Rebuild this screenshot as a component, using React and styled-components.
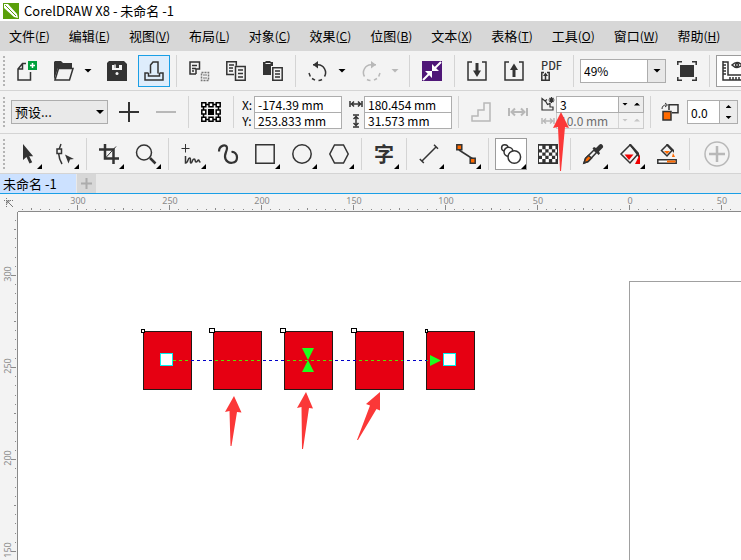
import React, { useEffect, useState } from 'react';
import styled, { createGlobalStyle, css } from 'styled-components';

const INK = '#333333';
const BAR = '#f3f3f3';
const LINE = '#d4d4d4';
const FIELD_LINE = '#adadad';
const FADED = '#b8b8b8';
const ORANGE = '#ff6a00';
const ACCENT = '#1a9fe6';
const RULER = '#8a8a8a';
const MARK = '#fb3838';
const SANS = '"Noto Sans CJK SC", "Noto Sans", sans-serif';

const GlobalStyle = createGlobalStyle`
  *, *::before, *::after {
    box-sizing: border-box;
  }

  body {
    margin: 0;
    overflow: hidden;
    background: #ffffff;
    color: #000000;
    font-family: ${SANS};
    font-size: 12px;
  }

  button, input, select {
    margin: 0;
    border-radius: 0;
    color: inherit;
    font: inherit;
  }
`;

const Window = styled.div`
  display: flex;
  flex-direction: column;
  min-height: 100vh;
`;

const TitleBar = styled.header`
  display: flex;
  align-items: center;
  gap: 5px;
  height: 21px;
  padding: 0 3px;
`;

const Title = styled.h1`
  margin: 0;
  font-size: 13px;
  font-weight: 400;
  line-height: 20px;
`;

const MenuBar = styled.nav`
  display: flex;
  gap: 1px;
  height: 30px;
  background: #d7d7d7;
  overflow: hidden;
`;

const MenuItem = styled.button`
  flex: none;
  padding: 0 9px;
  border: 0;
  background: none;
  font-size: 13px;
  line-height: 28px;
  white-space: nowrap;
`;

const Shortcut = styled.span`
  font-size: 12px;
`;

const Toolbar = styled.div`
  display: flex;
  align-items: center;
  gap: 5px;
  height: ${({ $tall }) => ($tall ? 43 : 40)}px;
  padding-left: 2px;
  border-bottom: 1px solid ${LINE};
  background: ${BAR};

  > * {
    flex: none;
  }
`;

const Grip = styled.span`
  width: 4px;
  height: 32px;
  background: radial-gradient(circle, #b4b4b4 1px, transparent 1px) 0 0 / 4px 4px;
`;

const Separator = styled.span`
  width: 1px;
  height: 32px;
  margin: 0 1px;
  background: ${LINE};
`;

const ToolButton = styled.button`
  position: relative;
  display: flex;
  align-items: center;
  justify-content: center;
  width: ${({ $size }) => ({ small: 25, large: 42 })[$size] || 32}px;
  height: 32px;
  padding: 0;
  border: 1px solid transparent;
  background: none;

  ${({ $state }) => $state === 'active' && css`
    border-color: ${ACCENT};
    background: #deedfc;
  `}

  ${({ $state }) => $state === 'pressed' && css`
    border-color: #9c9c9c;
    background: #ffffff;
  `}

  ${({ $flyout }) => $flyout && css`
    &::after {
      content: '';
      position: absolute;
      right: 0;
      bottom: 0;
      border-bottom: 5px solid #000000;
      border-left: 5px solid transparent;
    }
  `}
`;

const Split = styled.div`
  display: flex;
`;

const Caret = styled.span`
  width: 8px;
  height: 4px;
  background: currentColor;
  clip-path: ${({ $up }) => ($up ? 'polygon(50% 0, 100% 100%, 0 100%)' : 'polygon(0 0, 100% 0, 50% 100%)')};
`;

const CaretButton = styled.button`
  display: flex;
  align-items: center;
  justify-content: center;
  width: 16px;
  padding: 0;
  border: 0;
  background: none;

  &:disabled {
    color: ${FADED};
  }
`;

const SelectBox = styled.div`
  position: relative;
  width: ${({ $wide }) => ($wide ? 97 : 86)}px;

  > ${Caret} {
    position: absolute;
    top: 10px;
    right: ${({ $wide }) => ($wide ? 4 : 5)}px;
    pointer-events: none;
  }
`;

const Select = styled.select`
  appearance: none;
  display: block;
  width: 100%;
  height: 24px;
  padding: 0 3px;
  border: 1px solid ${FIELD_LINE};
  background: ${({ $split }) => ($split
    ? `linear-gradient(to left, #e8e8e8 17px, ${FIELD_LINE} 17px, ${FIELD_LINE} 18px, #ffffff 18px)`
    : '#e9e9e9')};
  font-size: ${({ $split }) => ($split ? 12 : 13)}px;
  line-height: 20px;
`;

const Fields = styled.div`
  position: relative;
  display: grid;
  grid-template-columns: ${({ $label }) => $label}px 88px;
  grid-template-rows: 17px 16px;
`;

const FieldLabel = styled.label`
  display: flex;
  align-items: center;
  justify-content: center;
`;

const Field = styled.div`
  display: flex;
  border: 1px solid ${FIELD_LINE};
  background: #ffffff;

  & + label + & {
    border-top: 0;
  }

  ${({ $muted }) => $muted && css`
    border-color: #cccccc;
    background: ${BAR};
    color: #6d6d6d;
  `}
`;

const TextInput = styled.input`
  flex: 1;
  min-width: 0;
  width: 100%;
  padding: 0 3px;
  border: 0;
  background: none;
  line-height: 15px;
`;

const Steppers = styled.div`
  display: flex;
  flex-direction: ${({ $stacked }) => ($stacked ? 'column' : 'row')};
  width: ${({ $stacked }) => ($stacked ? 18 : 25)}px;
  border-left: 1px solid ${({ $muted }) => ($muted ? LINE : FIELD_LINE)};
  background: ${({ $muted }) => ($muted ? BAR : '#ececec')};
`;

const Stepper = styled.button`
  display: flex;
  flex: 1;
  align-items: center;
  justify-content: center;
  padding: 0;
  border: 0;
  background: none;

  > ${Caret} {
    width: 6px;
    height: 3px;
  }

  &:disabled {
    color: #c6c6c6;
  }
`;

const OffsetField = styled(Field)`
  width: 51px;
  height: 24px;
`;

const CalloutArrow = styled.svg`
  position: absolute;
  top: 16px;
  left: 13px;
  z-index: 1;
  pointer-events: none;
`;

const Glyph = styled.span`
  color: ${INK};
  font-size: 20px;
  font-weight: 700;
  line-height: 20px;
`;

const Tabs = styled.div`
  display: flex;
  gap: 1px;
  height: 20px;
  border-bottom: 1px solid ${ACCENT};
  background: #e9e9e9;
`;

const Tab = styled.button`
  width: 76px;
  padding: 0 3px;
  border: 0;
  background: #cce1ff;
  font-size: 13px;
  line-height: 18px;
  text-align: left;
  white-space: nowrap;
`;

const AddTab = styled.button`
  display: flex;
  align-items: center;
  justify-content: center;
  width: 19px;
  padding: 0;
  border: 0;
  background: #d7d7d7;
`;

const Workspace = styled.main`
  display: grid;
  flex: 1;
  grid-template-columns: 18px minmax(0, 1fr);
  grid-template-rows: 18px minmax(300px, 1fr);
  background: ${BAR};
`;

const Origin = styled.div`
  display: flex;
  align-items: center;
  justify-content: center;
`;

const Scale = styled.svg`
  display: block;
  width: 100%;
  height: 100%;
  border: 0 solid ${RULER};
  border-width: ${({ $vertical }) => ($vertical ? '0 1px 0 0' : '0 0 1px 0')};
  font-family: "Noto Sans", sans-serif;
  font-size: 9px;
  overflow: visible;
`;

const Canvas = styled.svg`
  display: block;
  width: 100%;
  height: 100%;
  background: #ffffff;
`;

const Drawn = styled.svg`
  flex: none;
  overflow: visible;
`;

const Icon = ({ children, w = 20, h = 20, color = INK, stroke = 1.5 }) => (
  <Drawn width={w} height={h} viewBox={`0 0 ${w} ${h}`} fill="none" stroke={color} strokeWidth={stroke} aria-hidden="true">
    {children}
  </Drawn>
);

const icons = {
  create: (
    <Icon>
      <path d="M9 2.500H5.500L1 8v11h12.500v-8M1 8h4.500V2.500" />
      <path d="M11 0h9v9h-9z" fill="#00a03c" stroke="none" />
      <path d="M15.500 2v5M13 4.500h5" stroke="#fff" />
    </Icon>
  ),
  open: (
    <Icon>
      <path d="M0 19V1l1-1h6l2 2h9v5H4z" fill={INK} stroke="none" />
      <path d="M4.500 7.500H19L15.500 19H1z" fill={BAR} />
    </Icon>
  ),
  save: (
    <Icon>
      <path d="M2 0h15l3 3v17H0V2z" fill={INK} stroke="none" />
      <path d="M5 4h10v5H5z" fill={BAR} stroke="none" />
      <path d="M7 4h5v3H7z" fill={INK} stroke="none" />
      <path d="M8 3.500v3.500" stroke={BAR} />
      <circle cx="10" cy="12.500" r="1.500" fill={BAR} stroke="none" />
    </Icon>
  ),
  print: (
    <Icon>
      <path d="M6.500 12.500V4L9 1h5v11.500M4.500 12H1v7h18v-7h-3.500M4.500 12v3h11v-3" />
    </Icon>
  ),
  cut: (
    <Icon>
      <path d="M7 13H1V1h9.500v7H7v5M3 4.500h5M3 7.500h4M3 10h2" />
      <path d="M12.500 11.500h7v8h-7z" strokeDasharray="2 1" stroke="#777" />
      <path d="M14 14h4M14 17h4" stroke="#777" strokeWidth="1" />
    </Icon>
  ),
  copy: (
    <Icon>
      <path d="M8 13.500H.8V.8h9.500v4M3 4h5M3 7h4M3 10h4" />
      <path d="M9.500 5.500h9.700v13.700H9.500zM12 9h5M12 12.500h5M12 16h5" />
    </Icon>
  ),
  paste: (
    <Icon>
      <path d="M0 1h2l1-1h4l1 1h2v4H8v9H0z" fill={INK} stroke="none" />
      <path d="M2.500 2.500h5" stroke={BAR} strokeWidth="1" />
      <path d="M9.800 6.800h9.400v12.400H9.800zM12 10h5M12 13h5M12 16h5" />
    </Icon>
  ),
  undo: (
    <Icon>
      <path d="M5 3.800H10A7.800 7.800 0 0 1 16.500 15.500M14 18.500A8 8 0 0 1 10.500 19.500M7 19.200L4 17.500M2.300 15.500L1 12" />
      <path d="M5 3.800L10 0v7.500z" fill={INK} stroke="none" />
    </Icon>
  ),
  redo: (
    <Icon color={FADED}>
      <path d="M15 3.800H10A7.800 7.800 0 0 0 3.500 15.500M6 18.500A8 8 0 0 0 9.500 19.500M13 19.200L16 17.500M17.700 15.500L19 12" />
      <path d="M15 3.800L10 0v7.500z" fill={FADED} stroke="none" />
    </Icon>
  ),
  launch: (
    <Icon>
      <path d="M0 0h20v20H0z" fill="#4f1778" stroke="none" />
      <path d="M1 19L7 13M19 1L13 7" stroke="#fff" strokeWidth="2" />
      <path d="M3 10h7v7zM10 3v7h7z" fill="#fff" stroke="none" />
    </Icon>
  ),
  importFile: (
    <Icon>
      <path d="M5 1H1v18h18V1h-4" />
      <path d="M10 2v9" strokeWidth="3" />
      <path d="M6 9.500h8L10 16z" fill={INK} stroke="none" />
    </Icon>
  ),
  exportFile: (
    <Icon>
      <path d="M5 1H1v18h18V1h-4" />
      <path d="M10 8v8" strokeWidth="3" />
      <path d="M6 9h8L10 2.500z" fill={INK} stroke="none" />
    </Icon>
  ),
  pdf: (
    <Icon>
      <text x="0" y="9" fill={INK} stroke="none" fontSize="11" fontWeight="500">PDF</text>
      <path d="M3 11.500H.8v7.700h7.400v-7.700H6M4.500 14v5" />
      <path d="M2 15h5l-2.500-3.500z" fill={INK} stroke="none" />
    </Icon>
  ),
  fullScreen: (
    <Icon>
      <path d="M0 .8h5M.8 0v4M20 .8h-5M19.200 0v4M0 19.200h5M.8 20v-4M20 19.200h-5M19.200 20v-4" />
      <path d="M3 4h14v12H3z" fill={INK} stroke="none" />
    </Icon>
  ),
  rulers: (
    <Icon w={30}>
      <path d="M1 1h5v13h24M1 0v19h29M1 4h3M1 7h3M1 10h3M1 13h3M8 19v-3M11 19v-3M14 19v-3M17 19v-3M20 19v-3M23 19v-3" />
      <path d="M10 4q5-5 10 0q-5 5-10 0z" />
      <circle cx="15" cy="4" r="1.500" />
    </Icon>
  ),
  plus: <Icon stroke={2}><path d="M10 0v20M0 10h20" /></Icon>,
  minus: <Icon stroke={2} color={FADED}><path d="M0 10h20" /></Icon>,
  anchor: (
    <Icon color="#000">
      <path d="M2.500 2.500h15v15h-15z" />
      <path d="M.8.800h4v4h-4zM8 .8h4v4H8zM15.200.800h4v4h-4zM.8 8h4v4h-4zM15.200 8h4v4h-4zM.8 15.200h4v4h-4zM8 15.200h4v4H8zM15.200 15.200h4v4h-4z" fill="#fff" />
      <path d="M7 7h6v6H7z" fill="#000" stroke="none" />
    </Icon>
  ),
  steps: <Icon color={FADED}><path d="M1 19v-5h6V8h6V1h6v18z" /></Icon>,
  spacing: <Icon color={FADED} stroke={2}><path d="M1 6v8M19 6v8M3 10h14M7 6.500L3.500 10L7 13.500M13 6.500l3.500 3.500l-3.500 3.500" /></Icon>,
  width: <Icon w={14} h={8}><path d="M1 1v6M13 1v6M2 4h10M5 1.500L2.500 4L5 6.500M9 1.500L11.500 4L9 6.500" /></Icon>,
  widthFaded: <Icon w={14} h={8} color={FADED}><path d="M1 1v6M13 1v6M2 4h10M5 1.500L2.500 4L5 6.500M9 1.500L11.500 4L9 6.500" /></Icon>,
  height: <Icon w={8} h={14}><path d="M1 1h6M1 13h6M4 2v10M1.500 5L4 2.500L6.500 5M1.500 9L4 11.500L6.500 9" /></Icon>,
  count: (
    <Icon w={14} h={14} stroke={1.2}>
      <path d="M6 2.500L4 4L1 1.500V13H12V10H9V6.500L6.500 7.500L4.500 4" />
      <path d="M10.500 0v6M7.500 3h6M8.500 1l4 4M12.500 1l-4 4" />
    </Icon>
  ),
  duplicate: (
    <Icon w={18} h={18}>
      <path d="M8 7V1.800h9v8h-6" />
      <path d="M2 8.500h8V17H2z" fill={ORANGE} />
      <path d="M1 6C1 3 3 2 5 2M4 0l2.500 2L4 4" strokeWidth="1" />
    </Icon>
  ),
  pick: <Icon><path d="M6 0v16l3.500-3l3 6.500l2.700-1.300l-3-6h4z" fill={INK} stroke="none" /></Icon>,
  shape: (
    <Icon>
      <path d="M7 0Q2 10 8 20" />
      <path d="M3 5h4.500v4.500H3z" fill={BAR} />
      <path d="M11 10.500l9 4.500l-4 .5l-1.500 4z" fill={INK} stroke="none" />
    </Icon>
  ),
  crop: (
    <Icon>
      <path d="M0 5.500h14.500V20M6 0v14.500h14" strokeWidth="2.500" />
      <path d="M6.500 14L17 2.500" strokeWidth="1" />
    </Icon>
  ),
  zoom: (
    <Icon>
      <circle cx="8" cy="8.500" r="7.500" />
      <path d="M14 14l5.500 5.500" strokeWidth="2.500" />
    </Icon>
  ),
  freehand: (
    <Icon>
      <path d="M4.500 0v8.500M.5 4.500h8" strokeWidth="1" />
      <path d="M4.500 12v7c3 0 2-5 4-5s0 5 1.500 5s1-4 3-4s.5 3 2 3s1.500-2 2.500-2s0 2 2 2" />
    </Icon>
  ),
  artistic: <Icon stroke={2.200}><path d="M1 7.500C1 1 9 -.5 9 4C9 8 5.500 10.500 7.500 15C10 20.500 19 20 19 13.500C19 10 16.500 7.500 13.500 8" /></Icon>,
  rectangle: <Icon><path d="M.8.800h18.400v18.400H.8z" /></Icon>,
  ellipse: <Icon><circle cx="10" cy="10" r="9.200" /></Icon>,
  polygon: <Icon><path d="M5.500 1h9l4.700 9l-4.700 9h-9L.8 10z" /></Icon>,
  dimension: <Icon><path d="M3 17L17 3M.8 15l4 4M15 .8l4 4" /></Icon>,
  connector: (
    <Icon>
      <path d="M3 6l14 9" />
      <path d="M.8.800h5v5h-5zM14.200 14.200h5v5h-5z" fill={ORANGE} />
    </Icon>
  ),
  blend: (
    <Icon>
      <circle cx="3.800" cy="4" r="3.200" />
      <circle cx="7.500" cy="7.800" r="4.500" fill="#fff" />
      <circle cx="13.300" cy="13" r="6.300" fill="#fff" />
    </Icon>
  ),
  transparency: (
    <Icon>
      <path d="M0 0h20v20H0z" fill={INK} stroke="none" />
      {[0, 1, 2, 3, 4].map((row) => (
        <path key={row} d={`M${row % 2 ? 4 : 1} ${3.5 + row * 3.3}H19`} stroke="#fff" strokeWidth="3.300" strokeDasharray="3.300" />
      ))}
    </Icon>
  ),
  dropper: (
    <Icon>
      <path d="M1 19l1.500-4.500L11 6l2.500 2.500L5 17.500z" />
      <path d="M1 19l1.500-4.500l3-3l3 2.500L5 17.500z" fill={ORANGE} />
      <path d="M9.500 4.500l1.500-1.500l2 1l3-3q2-2 3.500 0t-.5 3.500l-3 3l1 2l-1.500 1.500z" fill={INK} stroke="none" />
    </Icon>
  ),
  fill: (
    <Icon>
      <path d="M10 1L1 10l9 9l8-9z" />
      <path d="M9 0l2 0l8 9v5z" fill={INK} stroke="none" />
      <path d="M4.500 10.500h9L9 16z" fill="#f00000" stroke="none" />
      <path d="M20 10v10h-5z" fill="#f00000" stroke="none" />
    </Icon>
  ),
  smartFill: (
    <Icon>
      <path d="M10 1L4.500 6.500L10 12l5-5.500z" />
      <path d="M9 0h2l6 6v3z" fill={INK} stroke="none" />
      <path d="M7 7h6l-3 3zM16 9l2 4h-3z" fill={ORANGE} stroke="none" />
      <path d="M.8 15.800h18.400v3.400H.8z" fill="#fff" />
      <path d="M10 16.500h8.500v2H10z" fill={ORANGE} stroke="none" />
    </Icon>
  ),
  customize: (
    <Icon w={26} h={26} color={FADED}>
      <circle cx="13" cy="13" r="12" />
      <path d="M13 5v16M5 13h16" strokeWidth="2.500" />
    </Icon>
  ),
};

const MENUS = [
  ['文件', 'F'], ['编辑', 'E'], ['视图', 'V'], ['布局', 'L'], ['对象', 'C'], ['效果', 'C'],
  ['位图', 'B'], ['文本', 'X'], ['表格', 'T'], ['工具', 'O'], ['窗口', 'W'], ['帮助', 'H'],
];

const TOOL_GROUPS = [
  [['pick', true], ['shape', true]],
  [['crop', true], ['zoom', true]],
  [['freehand', true], ['artistic'], ['rectangle', true], ['ellipse', true], ['polygon', true]],
  [['text', true]],
  [['dimension', true], ['connector', true]],
  [['blend', true], ['transparency']],
  [['dropper', true], ['fill', true], ['smartFill']],
];

const Tool = ({ name, ...rest }) => (
  <ToolButton type="button" aria-label={name} {...rest}>
    {name === 'text' ? <Glyph>字</Glyph> : icons[name]}
  </ToolButton>
);

const MeasureField = ({ id, label, value }) => (
  <>
    <FieldLabel htmlFor={id}>{label}</FieldLabel>
    <Field>
      <TextInput id={id} defaultValue={value} />
    </Field>
  </>
);

const StandardBar = () => (
  <Toolbar>
    <Grip />
    <Tool name="create" />
    <Split>
      <Tool name="open" />
      <CaretButton type="button" aria-label="recent files"><Caret /></CaretButton>
    </Split>
    <Tool name="save" />
    <Tool name="print" $state="active" />
    <Separator />
    <Tool name="cut" />
    <Tool name="copy" />
    <Tool name="paste" />
    <Separator />
    <Split>
      <Tool name="undo" />
      <CaretButton type="button" aria-label="undo list"><Caret /></CaretButton>
    </Split>
    <Split>
      <Tool name="redo" disabled />
      <CaretButton type="button" aria-label="redo list" disabled><Caret /></CaretButton>
    </Split>
    <Separator />
    <Tool name="launch" />
    <Separator />
    <Tool name="importFile" />
    <Tool name="exportFile" />
    <Tool name="pdf" />
    <Separator />
    <SelectBox>
      <Select aria-label="zoom level" $split>
        <option>49%</option>
      </Select>
      <Caret />
    </SelectBox>
    <Tool name="fullScreen" />
    <Separator />
    <Tool name="rulers" $state="pressed" $size="large" />
  </Toolbar>
);

const PropertyBar = () => (
  <Toolbar $tall>
    <Grip />
    <SelectBox $wide>
      <Select aria-label="preset">
        <option>预设...</option>
      </Select>
      <Caret />
    </SelectBox>
    <Tool name="plus" />
    <Tool name="minus" disabled />
    <Separator />
    <Tool name="anchor" />
    <Separator />
    <Fields $label={14}>
      <MeasureField id="pos-x" label="X:" value="-174.39 mm" />
      <MeasureField id="pos-y" label="Y:" value="253.833 mm" />
    </Fields>
    <Fields $label={17}>
      <MeasureField id="size-w" label={icons.width} value="180.454 mm" />
      <MeasureField id="size-h" label={icons.height} value="31.573 mm" />
    </Fields>
    <Separator />
    <Tool name="steps" disabled />
    <Tool name="spacing" disabled />
    <Fields $label={17}>
      <FieldLabel htmlFor="step-count">{icons.count}</FieldLabel>
      <Field>
        <TextInput id="step-count" defaultValue="3" />
        <Steppers>
          <Stepper type="button" aria-label="fewer steps"><Caret /></Stepper>
          <Stepper type="button" aria-label="more steps"><Caret $up /></Stepper>
        </Steppers>
      </Field>
      <FieldLabel htmlFor="step-gap">{icons.widthFaded}</FieldLabel>
      <Field $muted>
        <TextInput id="step-gap" defaultValue="10.0 mm" disabled />
        <Steppers $muted>
          <Stepper type="button" aria-label="less spacing" disabled><Caret /></Stepper>
          <Stepper type="button" aria-label="more spacing" disabled><Caret $up /></Stepper>
        </Steppers>
      </Field>
      <CalloutArrow width="17" height="60" aria-hidden="true">
        <path d="M9 0L1 16l5-1l2 44h1l4-44l4 1z" fill={MARK} />
      </CalloutArrow>
    </Fields>
    <Separator />
    <Tool name="duplicate" $size="small" />
    <OffsetField>
      <TextInput aria-label="offset" defaultValue="0.0" />
      <Steppers $stacked>
        <Stepper type="button" aria-label="more offset"><Caret $up /></Stepper>
        <Stepper type="button" aria-label="less offset"><Caret /></Stepper>
      </Steppers>
    </OffsetField>
  </Toolbar>
);

const Toolbox = () => (
  <Toolbar>
    <Grip />
    {TOOL_GROUPS.map((group) => (
      <React.Fragment key={group[0][0]}>
        {group.map(([name, flyout]) => (
          <Tool key={name} name={name} $flyout={flyout} $state={name === 'blend' ? 'pressed' : undefined} />
        ))}
        <Separator />
      </React.Fragment>
    ))}
    <Tool name="customize" $size="large" />
  </Toolbar>
);

// 92px on screen for every 50mm, ticks every 5mm
const MAJOR = 92;
const LABEL_ROOM = 10;

const tickSize = (i) => {
  if (i % 10 === 0) return 5;
  return i % 5 === 0 ? 2 : 1;
};

const ticksFor = (origin, length) => {
  const first = -Math.floor((origin * 10) / MAJOR);
  const count = Math.floor((length * 10) / MAJOR);
  return Array.from({ length: count }, (_, n) => ({
    i: first + n,
    at: Math.round(origin + ((first + n) * MAJOR) / 10),
  })).filter(({ at }) => at < length);
};

const labelsFor = (origin, length) => Array.from(
  { length: Math.max(0, Math.floor((length - LABEL_ROOM - origin) / MAJOR) + 1) },
  (_, n) => ({ at: origin + n * MAJOR, text: Math.abs(300 - n * 50) }),
);

const useWindowSize = () => {
  const [size, setSize] = useState([window.innerWidth, window.innerHeight]);
  useEffect(() => {
    const update = () => setSize([window.innerWidth, window.innerHeight]);
    window.addEventListener('resize', update);
    return () => window.removeEventListener('resize', update);
  }, []);
  return size;
};

const TopScale = ({ length }) => (
  <Scale>
    {ticksFor(59, length).map(({ i, at }) => (
      <rect key={i} x={at} y={16 - tickSize(i)} width="1" height={tickSize(i)} fill={RULER} />
    ))}
    {labelsFor(59, length).map(({ at, text }) => (
      <text key={at} x={at + 1} y="10" fill={RULER} textAnchor="middle">{text}</text>
    ))}
  </Scale>
);

const SideScale = ({ length }) => (
  <Scale $vertical>
    {ticksFor(63, length).map(({ i, at }) => (
      <rect key={i} x={16 - tickSize(i)} y={at} width={tickSize(i)} height="1" fill={RULER} />
    ))}
    {labelsFor(62, length).map(({ at, text }) => (
      <text key={at} transform={`translate(11 ${at}) rotate(-90)`} fill={RULER} textAnchor="middle">
        {text}
      </text>
    ))}
  </Scale>
);

const SQUARES = [
  { x: 125, node: 4 }, { x: 195, node: 6 }, { x: 266, node: 6 }, { x: 337, node: 6 }, { x: 408, node: 3 },
];

const Drawing = () => (
  <Canvas role="img" aria-label="blended squares">
    <rect x="611.5" y="69.5" width="386" height="546" fill="#fff" stroke="#a0a0a0" />
    {SQUARES.map(({ x, node }) => (
      <g key={x}>
        <rect x={x + 0.5} y="119.5" width="48" height="58" fill="#e60012" stroke="#231815" />
        <rect
          x={x + 2.5 - node}
          y={node === 6 ? 116.5 : 117.5}
          width={node - 1}
          height={node === 6 ? 4 : 3}
          fill="#fff"
          stroke="#000"
        />
      </g>
    ))}
    <path d="M155 148.500H425" stroke="#0000c8" strokeDasharray="3 3" />
    {SQUARES.map(({ x }, i) => (
      <svg key={x} x={x + 1} y="140" width="47" height="16">
        <path d="M0 8.500H47" stroke="#e60012" />
        <path d={`M${154 - x} 8.500H${i === 4 ? 17 : 47}`} stroke="#5be300" strokeDasharray="3 3" />
      </svg>
    ))}
    <path d="M284 136h12l-6 12l6 12h-12l6-12zM412 143l11 5.500l-11 5.500z" fill="#1dff1d" />
    <rect x="142.5" y="141.5" width="12" height="12" fill="#fff" stroke="#00f0f0" />
    <rect x="425.5" y="141.5" width="12" height="12" fill="#fff" stroke="#00f0f0" />
    <path
      d="M216 184l-9 16l4.500-1l1 35h1l5.500-34l4.500.5z
        M288 180l-9 16l4.500-1l.5 42h1l6-41l4 .5z
        M362 180l-14 12l4 1.500l-13 34.500h1l18.500-31l3.500 1.500z"
      fill={MARK}
    />
  </Canvas>
);

const App = () => {
  const [width, height] = useWindowSize();

  return (
    <>
      <GlobalStyle />
      <Window>
        <TitleBar>
          <Icon w={16} h={16}>
            <path d="M0 0h16v16H0z" fill="#5a9f0a" stroke="none" />
            <path d="M1 1h4l9 10l1 4l-4-1L1 5z" fill="#fff" stroke="none" />
            <path d="M2 2l11 11" stroke="#5a9f0a" strokeWidth="1" />
          </Icon>
          <Title>CorelDRAW X8 - 未命名 -1</Title>
        </TitleBar>
        <MenuBar>
          {MENUS.map(([name, key]) => (
            <MenuItem key={name} type="button">
              {name}
              <Shortcut>(<u>{key}</u>)</Shortcut>
            </MenuItem>
          ))}
        </MenuBar>
        <StandardBar />
        <PropertyBar />
        <Toolbox />
        <Tabs>
          <Tab type="button">未命名 -1</Tab>
          <AddTab type="button" aria-label="new tab">
            <Icon w={11} h={11} color="#acacac" stroke={2}><path d="M5.500 0v11M0 5.500h11" /></Icon>
          </AddTab>
        </Tabs>
        <Workspace>
          <Origin>
            <Icon w={10} h={10} color="#777" stroke={1}>
              <path d="M0 2.500h10M2.500 0v10" strokeDasharray="1 1" />
              <path d="M3 3l6 6M3 6V3h3" />
            </Icon>
          </Origin>
          <TopScale length={width - 18} />
          <SideScale length={height - 212} />
          <Drawing />
        </Workspace>
      </Window>
    </>
  );
};

export default App;
